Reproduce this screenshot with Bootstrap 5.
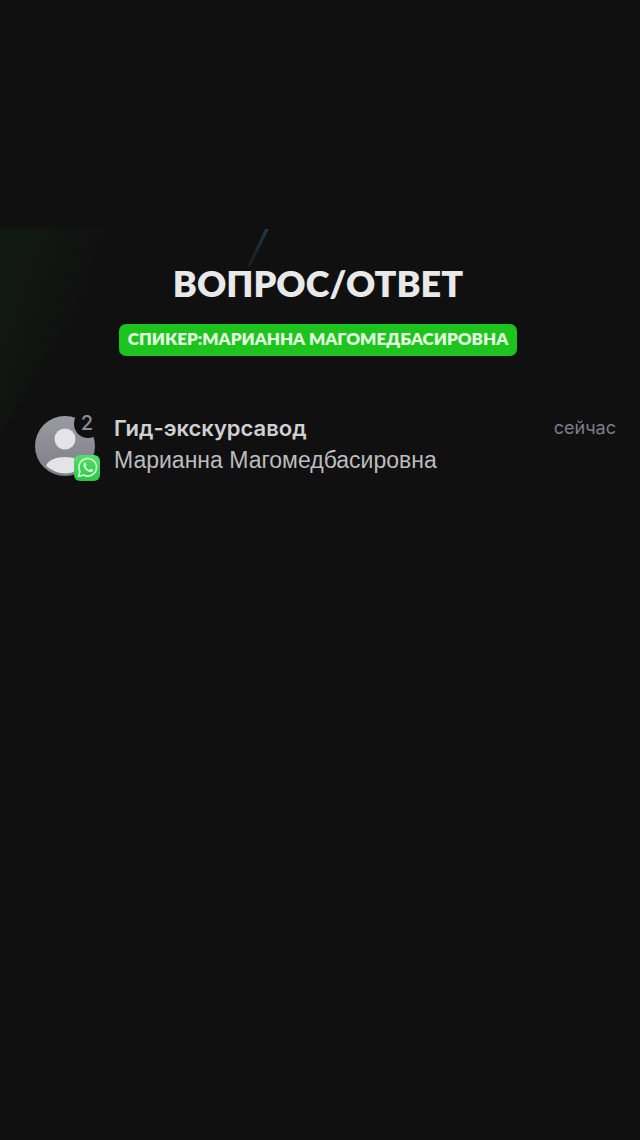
<!DOCTYPE html>
<html lang="ru">
<head>
<meta charset="utf-8">
<meta name="viewport" content="width=device-width, initial-scale=1">
<title>Вопрос/Ответ</title>
<link href="https://cdn.jsdelivr.net/npm/bootstrap@5.3.0/dist/css/bootstrap.min.css" rel="stylesheet">
<style>
  body { background: #101010; color: #e9e9e9; font-family: Inter, "Liberation Sans", sans-serif; }
  .story { padding-top: 229px; }
  .glow { width: 124px; height: 205px; }
  .ray { left: 244px; width: 28px; height: 40px; }
  .heading-block { padding: 34px 4px 0 0; font-family: Lato, "Open Sans", sans-serif; font-weight: 800; }
  .story-title { font-size: 36px; line-height: 40px; font-weight: 800; }
  .speaker { margin-top: 21px; padding: 0 9px 2px; font-size: 17px; line-height: 30px; border-radius: 7px; background: #1ec41e; color: #e4fbe0; white-space: nowrap; }
  .notice { margin-top: 56px; padding: 0 24px 0 34px; gap: 14px; }
  .avatar { width: 66px; height: 70px; }
  .sender { font-size: 22px; line-height: 32px; font-weight: 600; color: #d0d0d2; }
  .message { font-family: "Liberation Sans", sans-serif; font-size: 23px; line-height: 32px; color: #bcbcbe; }
  .when { font-size: 18px; line-height: 32px; color: #7b7f85; }
</style>
</head>
<body>
<main class="story min-vh-100">
  <div class="position-relative">
    <svg class="glow position-absolute top-0 start-0" viewBox="0 0 124 205" aria-hidden="true">
      <defs><linearGradient id="glowFill" x1="0" y1="0" x2="1" y2=".6"><stop offset="0" stop-color="#111812"/><stop offset=".35" stop-color="#111612"/><stop offset=".65" stop-color="#101010"/></linearGradient></defs>
      <path d="M0 0H124L0 205Z" fill="url(#glowFill)"/>
    </svg>
    <svg class="ray position-absolute top-0" viewBox="0 0 28 40" aria-hidden="true">
      <defs><linearGradient id="rayFill" x1="0" y1="0" x2="0" y2="1"><stop offset="0" stop-color="#203644"/><stop offset="1" stop-color="#171c20"/></linearGradient></defs>
      <path d="M21 0H25L6 38H3Z" fill="url(#rayFill)"/>
    </svg>
    <header class="heading-block position-relative d-flex flex-column align-items-center">
      <h1 class="story-title m-0">ВОПРОС/ОТВЕТ</h1>
      <p class="speaker mb-0">СПИКЕР:МАРИАННА МАГОМЕДБАСИРОВНА</p>
    </header>
    <article class="notice position-relative d-flex align-items-start">
      <svg class="avatar flex-shrink-0" viewBox="0 0 66 70" role="img" aria-label="2, WhatsApp">
        <defs>
          <linearGradient id="face" x1="0" y1="0" x2="0" y2="1"><stop offset="0" stop-color="#9c9ca4"/><stop offset="1" stop-color="#7b7b84"/></linearGradient>
          <linearGradient id="wa" x1="0" y1="0" x2="0" y2="1"><stop offset="0" stop-color="#55e068"/><stop offset="1" stop-color="#2fc548"/></linearGradient>
          <clipPath id="disc"><circle cx="31" cy="34" r="30"/></clipPath>
        </defs>
        <g clip-path="url(#disc)">
          <rect width="66" height="70" fill="url(#face)"/>
          <circle cx="31" cy="27" r="10.500" fill="#e4e4e8"/>
          <path d="M12 54C16 42 46 42 50 54Q31 69 12 54Z" fill="#e4e4e8"/>
        </g>
        <circle cx="54" cy="12" r="14" fill="#101010"/>
        <text x="53" y="18" text-anchor="middle" font-size="20" font-weight="500" fill="#8f8f92">2</text>
        <rect x="40" y="43" width="26" height="26" rx="6" fill="url(#wa)"/>
        <g transform="translate(0 1)">
          <path d="M44.500 63.500L46 58.500A8.800 8.800 0 1 1 49.500 62Z" fill="none" stroke="#d2f8d6" stroke-width="1.600" stroke-linejoin="round"/>
          <path d="M50 50C51 49 51.500 49.500 52.500 52C52.500 53 51.500 53 52 54C53 55.500 54 56.500 55.500 57C56.500 56.500 56.500 55.500 57.500 56C59.500 57 59.500 57 58.500 58.500C57 60 54.500 59 52 57C50 55 48.500 52 50 50Z" fill="#d2f8d6"/>
        </g>
      </svg>
      <div class="flex-grow-1">
        <div class="d-flex justify-content-between">
          <span class="sender">Гид-экскурсавод</span>
          <time class="when">сейчас</time>
        </div>
        <p class="message mb-0">Марианна Магомедбасировна</p>
      </div>
    </article>
  </div>
</main>
<script src="https://cdn.jsdelivr.net/npm/bootstrap@5.3.0/dist/js/bootstrap.bundle.min.js"></script>
</body>
</html>
